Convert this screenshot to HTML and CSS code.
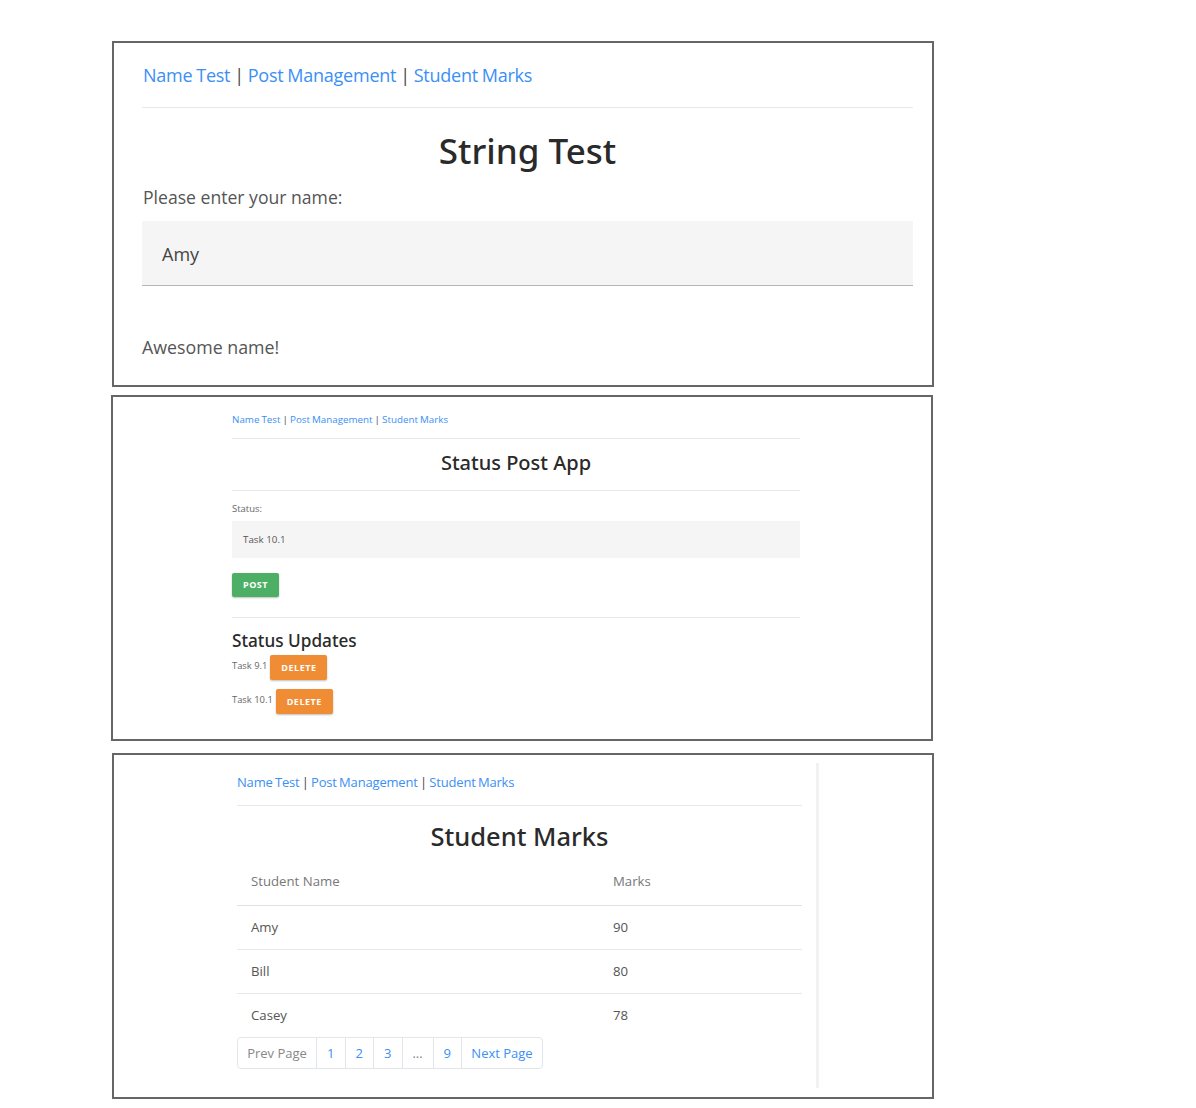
FILE: index.html
```html
<!DOCTYPE html>
<html lang="en">
<head>
  <meta charset="UTF-8">
  <meta name="viewport" content="width=device-width, initial-scale=1">
  <title>App Screens</title>
  <link rel="stylesheet" href="styles.css">
</head>
<body>
  <div class="panel panel-name">
    <div class="nav">
      <a href="#">Name Test</a> | <a href="#">Post Management</a> | <a href="#">Student Marks</a>
    </div>
    <h1>String Test</h1>
    <label class="name-label">Please enter your name:</label>
    <div class="name-input">Amy</div>
    <p class="name-result">Awesome name!</p>
  </div>

  <div class="panel panel-post">
    <div class="post-inner">
      <div class="nav">
        <a href="#">Name Test</a> | <a href="#">Post Management</a> | <a href="#">Student Marks</a>
      </div>
      <h2>Status Post App</h2>
      <label class="status-label">Status:</label>
      <div class="status-input">Task 10.1</div>
      <button class="btn btn-post">POST</button>
      <h3>Status Updates</h3>
      <div class="update">
        <span>Task 9.1</span>
        <button class="btn btn-delete">DELETE</button>
      </div>
      <div class="update">
        <span>Task 10.1</span>
        <button class="btn btn-delete">DELETE</button>
      </div>
    </div>
  </div>

  <div class="panel panel-marks">
    <div class="marks-inner">
      <div class="nav">
        <a href="#">Name Test</a> | <a href="#">Post Management</a> | <a href="#">Student Marks</a>
      </div>
      <h2>Student Marks</h2>
      <table>
        <thead>
          <tr><th>Student Name</th><th>Marks</th></tr>
        </thead>
        <tbody>
          <tr><td>Amy</td><td>90</td></tr>
          <tr><td>Bill</td><td>80</td></tr>
          <tr><td>Casey</td><td>78</td></tr>
        </tbody>
      </table>
      <div class="pager">
        <span class="page page-prev">Prev Page</span>
        <a class="page page-num" href="#">1</a>
        <a class="page page-num" href="#">2</a>
        <a class="page page-num" href="#">3</a>
        <span class="page page-gap">...</span>
        <a class="page page-num" href="#">9</a>
        <a class="page page-next" href="#">Next Page</a>
      </div>
    </div>
  </div>
</body>
</html>
```

FILE: styles.css
```css
body {
  font-family: "Open Sans", "Noto Sans", sans-serif;
  background-color: #ffffff;
  color: #212529;
  margin: 0;
  padding: 41px 0 0 112px;
}
a {
  color: #3b8ff5;
  text-decoration: none;
}
h1,
h2,
h3 {
  font-family: "Noto Sans", "Open Sans", sans-serif;
  font-weight: 500;
  color: #2a2a2a;
}
.panel {
  box-sizing: border-box;
  width: 822px;
  height: 346px;
  border: 2px solid #666;
  background-color: #fff;
}

/* first panel */
.panel-name {
  padding: 0 19px 0 28px;
}
.panel-name .nav {
  font-size: 18px;
  letter-spacing: -0.25px;
  word-spacing: -0.5px;
  height: 64px;
  line-height: 64px;
  padding-left: 1px;
  border-bottom: 1px solid #e8e8e8;
  color: #444;
}
h1 {
  margin: 0;
  padding-top: 15px;
  height: 58px;
  line-height: 56px;
  font-size: 35px;
  text-align: center;
}
.name-label {
  display: block;
  margin-top: 3px;
  padding-left: 1px;
  font-size: 17.6px;
  line-height: 26px;
  color: #555;
}
.name-input {
  margin-top: 11px;
  height: 64px;
  line-height: 66px;
  padding-left: 20px;
  font-size: 18px;
  color: #444;
  background-color: #f5f5f5;
  border-bottom: 1.5px solid #b5b5b5;
}
.name-result {
  margin: 48px 0 0;
  font-size: 17.8px;
  line-height: 26px;
  color: #555;
}

/* second panel */
.panel-post {
  margin: 8px 0 0 -1px;
  padding: 0 131px 0 119px;
}
.panel-post .nav {
  font-size: 9.8px;
  word-spacing: -0.5px;
  height: 41px;
  line-height: 46px;
  border-bottom: 1px solid #e8e8e8;
  color: #444;
}
.panel-post h2 {
  margin: 0;
  height: 51px;
  line-height: 47px;
  font-size: 20px;
  text-align: center;
  border-bottom: 1px solid #e8e8e8;
}
.status-label {
  display: block;
  margin-top: 11px;
  font-size: 9.5px;
  line-height: 14px;
  color: #666;
}
.status-input {
  margin-top: 5px;
  height: 37px;
  line-height: 37px;
  padding-left: 11px;
  font-size: 9.8px;
  color: #555;
  background-color: #f5f5f5;
}
.btn {
  display: block;
  border: 0;
  border-radius: 2px;
  color: #fff;
  font-family: inherit;
  font-size: 9px;
  font-weight: 700;
  letter-spacing: 0.5px;
  padding: 0 0 1px;
  box-shadow: 0 1px 2px rgba(0, 0, 0, 0.25);
}
.btn-post {
  margin-top: 15px;
  width: 47px;
  height: 24px;
  background-color: #4caf65;
}
.panel-post h3 {
  margin: 20px 0 0;
  padding-top: 9px;
  height: 28px;
  line-height: 28px;
  border-top: 1px solid #e8e8e8;
  font-size: 17.2px;
}
.update {
  display: flex;
  align-items: flex-start;
  gap: 3px;
  height: 25px;
  margin-bottom: 9px;
  font-size: 9.4px;
  line-height: 22px;
  color: #666;
}
.btn-delete {
  width: 57px;
  height: 25px;
  background-color: #f08c33;
}

/* third panel */
.panel-marks {
  margin-top: 12px;
  padding: 8px 0 0 123px;
}
.marks-inner {
  box-sizing: border-box;
  width: 582px;
  height: 325px;
  padding-right: 14px;
  border-right: 3px solid #f2f2f2;
}
.panel-marks .nav {
  font-size: 13px;
  letter-spacing: -0.18px;
  word-spacing: -0.9px;
  height: 42px;
  line-height: 38px;
  border-bottom: 1px solid #e8e8e8;
  color: #444;
}
.panel-marks h2 {
  margin: 0;
  height: 56px;
  line-height: 60px;
  font-size: 25.5px;
  text-align: center;
}
table {
  width: 100%;
  border-collapse: collapse;
  font-size: 13.2px;
  color: #555;
}
th {
  height: 38px;
  padding: 0 0 5px 13px;
  text-align: left;
  font-weight: 400;
  color: #777;
  border-bottom: 1px solid #e2e2e2;
}
td {
  height: 42px;
  padding: 0 0 1px 13px;
  border-bottom: 1px solid #e8e8e8;
}
tbody tr:last-child td {
  border-bottom: 0;
}
th:first-child,
td:first-child {
  width: 349px;
  padding-left: 14px;
}
.pager {
  display: inline-flex;
  height: 32px;
  font-size: 13px;
  line-height: 30px;
  border: 1px solid #e2e6ea;
  border-radius: 4px;
  box-sizing: border-box;
}
.page {
  box-sizing: border-box;
  text-align: center;
  border-right: 1px solid #e2e6ea;
  color: #3b8ff5;
}
.page-prev {
  width: 79px;
  color: #888;
}
.page-num {
  width: 28.5px;
}
.page-gap {
  width: 31px;
  color: #888;
}
.page-next {
  width: 80px;
  border-right: 0;
}
```
